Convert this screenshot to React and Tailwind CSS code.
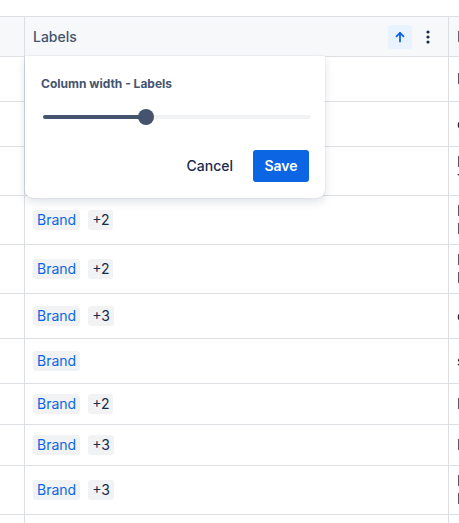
import React, { useState } from 'react';

// the first three rows sit under the open width popover
const rows = [
  { h: 'h-[45px]', covered: true, right: ['Planning'] },
  { h: 'h-[45px]', covered: true, right: ['campaign'] },
  { h: 'h-[49px]', covered: true, right: ['Roadmap', 'Timeline'] },
  { h: 'h-[49px]', extra: '+2', right: ['Brand', 'Launch'] },
  { h: 'h-[49px]', extra: '+2', right: ['Rebrand', 'Brief'] },
  { h: 'h-[45px]', extra: '+3', right: ['content'] },
  { h: 'h-[45px]', extra: null, right: ['social'] },
  { h: 'h-[41px]', extra: '+2', right: ['Press'] },
  { h: 'h-[41px]', extra: '+3', right: ['Internal'] },
  { h: 'h-[49px]', extra: '+3', right: ['Partner', 'Launch'] },
  { h: 'h-[45px]', extra: '+2', right: ['Plan'] },
];

function Tag({ children, blue }) {
  return (
    <span
      className={`inline-flex h-5 items-center rounded-[3px] bg-[#f1f2f4] px-1 text-sm leading-5 ${
        blue ? 'text-[#0c66e4]' : 'text-[#172b4d]'
      }`}
    >
      {children}
    </span>
  );
}

function Kebab() {
  return (
    <svg width="16" height="16" viewBox="0 0 16 16" fill="#172b4d">
      <circle cx="8" cy="3" r="1.6" />
      <circle cx="8" cy="8" r="1.6" />
      <circle cx="8" cy="13" r="1.6" />
    </svg>
  );
}

function UpArrow() {
  return (
    <svg width="12" height="12" viewBox="0 0 12 12" fill="none" stroke="#0c66e4" strokeWidth="1.8" strokeLinecap="round" strokeLinejoin="round">
      <path d="M6 10.5V2" />
      <path d="M2.5 5.3L6 1.8l3.5 3.5" />
    </svg>
  );
}

function WidthPopover() {
  const [value] = useState(38.6);
  return (
    <div className="absolute left-0 top-full z-10 w-[300px] rounded-b-lg bg-white px-4 pb-4 pt-5 shadow-[0_4px_10px_rgba(9,30,66,0.13),0_0_1px_rgba(9,30,66,0.28)]">
      <p className="text-xs font-bold leading-4 text-[#44546f]">Column width - Labels</p>
      <div className="relative ml-[2px] mr-[-2px] mt-[17px] h-4">
        <div className="absolute left-0 right-0 top-[6px] h-1 rounded-full bg-[#f1f2f4]" />
        <div className="absolute left-0 top-[6px] h-1 rounded-full bg-[#44546f]" style={{ width: `${value}%` }} />
        <div
          className="absolute top-0 h-4 w-4 -translate-x-1/2 rounded-full bg-[#44546f]"
          style={{ left: `${value}%` }}
        />
      </div>
      <div className="mt-[25px] flex justify-end gap-2">
        <button className="h-8 rounded-[3px] px-3 text-sm font-medium text-[#172b4d]">Cancel</button>
        <button className="h-8 w-14 rounded-[3px] bg-[#0c66e4] text-sm font-semibold text-white">Save</button>
      </div>
    </div>
  );
}

export default function App() {
  return (
    <div className="h-[523px] w-[459px] overflow-hidden bg-white pt-4 font-['Inter',sans-serif] text-[#172b4d] antialiased">
      <div className="w-[700px]">
        <div className="flex h-[41px] border-y border-[#dcdfe4] bg-[#f7f8f9]">
          <div className="w-[25px] shrink-0 border-r border-[#dcdfe4]" />
          <div className="relative flex w-[424px] shrink-0 items-center border-r border-[#dcdfe4] pl-2 pr-2">
            <span className="text-sm font-medium text-[#44546f]">Labels</span>
            <div className="ml-auto flex items-center gap-1">
              <button className="flex h-6 w-6 items-center justify-center rounded-[3px] bg-[#e9f2ff]">
                <UpArrow />
              </button>
              <button className="flex h-6 w-6 items-center justify-center rounded-[3px]">
                <Kebab />
              </button>
            </div>
            <WidthPopover />
          </div>
          <div className="flex transform-gpu items-center pl-2 text-sm font-medium text-[#44546f]">Description</div>
        </div>

        {rows.map((r, i) => (
          <div key={i} className={`flex ${r.h} border-b border-[#dcdfe4]`}>
            <div className="w-[25px] shrink-0 border-r border-[#dcdfe4]" />
            <div className="flex w-[424px] shrink-0 items-center gap-2 border-r border-[#dcdfe4] pl-2">
              {!r.covered && <Tag blue>Brand</Tag>}
              {!r.covered && r.extra && <Tag>{r.extra}</Tag>}
            </div>
            <div className="flex transform-gpu flex-col justify-center pl-2 text-sm leading-[18px] text-[#172b4d]">
              {r.right.map((t) => (
                <span key={t}>{t}</span>
              ))}
            </div>
          </div>
        ))}
      </div>
    </div>
  );
}
